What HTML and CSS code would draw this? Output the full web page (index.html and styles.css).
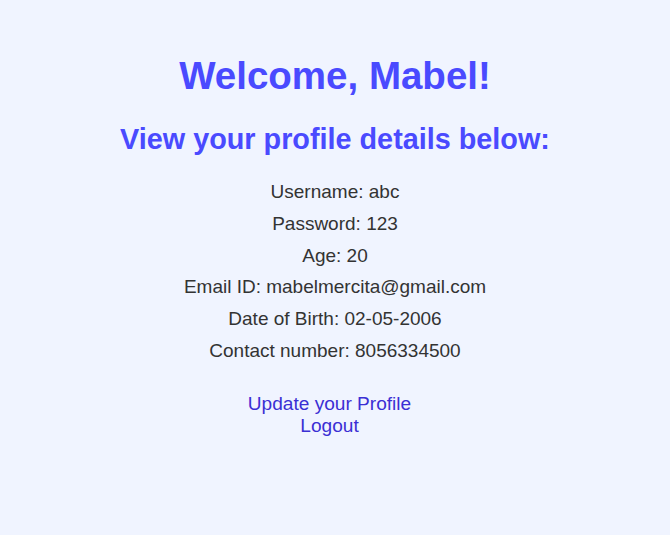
FILE: index.html
```html
<!DOCTYPE html>
<html>
<head>
<meta charset="utf-8">
<link rel="stylesheet" href="styles.css">
</head>
<body>
<main class="profile">
  <h1 class="title">Welcome, Mabel!</h1>
  <h2 class="subtitle">View your profile details below:</h2>
  <div class="details">
    <p class="item">Username: abc</p>
    <p class="item">Password: 123</p>
    <p class="item">Age: 20</p>
    <p class="item">Email ID: mabelmercita@gmail.com</p>
    <p class="item">Date of Birth: 02-05-2006</p>
    <p class="item">Contact number: 8056334500</p>
  </div>
  <div class="links">
    <a class="link" href="#">Update your Profile</a>
    <a class="link" href="#">Logout</a>
  </div>
</main>
</body>
</html>
```

FILE: styles.css
```css
html, body {
  margin: 0;
  padding: 0;
  background: #f0f4ff;
  height: 100%;
}
body {
  font-family: "Liberation Sans", Arial, sans-serif;
  color: #333333;
}
.profile {
  display: flex;
  flex-direction: column;
  align-items: center;
  text-align: center;
  padding-top: 55px;
}
.title {
  margin: 0;
  font-size: 38.5px;
  line-height: 42px;
  font-weight: bold;
  color: #4a4aff;
}
.subtitle {
  margin: 26px 0 0;
  font-size: 28.8px;
  line-height: 32px;
  font-weight: bold;
  color: #4a4aff;
}
.details {
  margin-top: 26px;
  display: flex;
  flex-direction: column;
  gap: 10.8px;
}
.item {
  margin: 0;
  font-size: 19px;
  line-height: 21px;
}
.links {
  margin-top: 32px;
  padding-right: 11px;
  display: flex;
  flex-direction: column;
  gap: 1px;
}
.link {
  font-size: 19.1px;
  line-height: 21px;
  color: #3b2fd4;
  text-decoration: none;
}
```
